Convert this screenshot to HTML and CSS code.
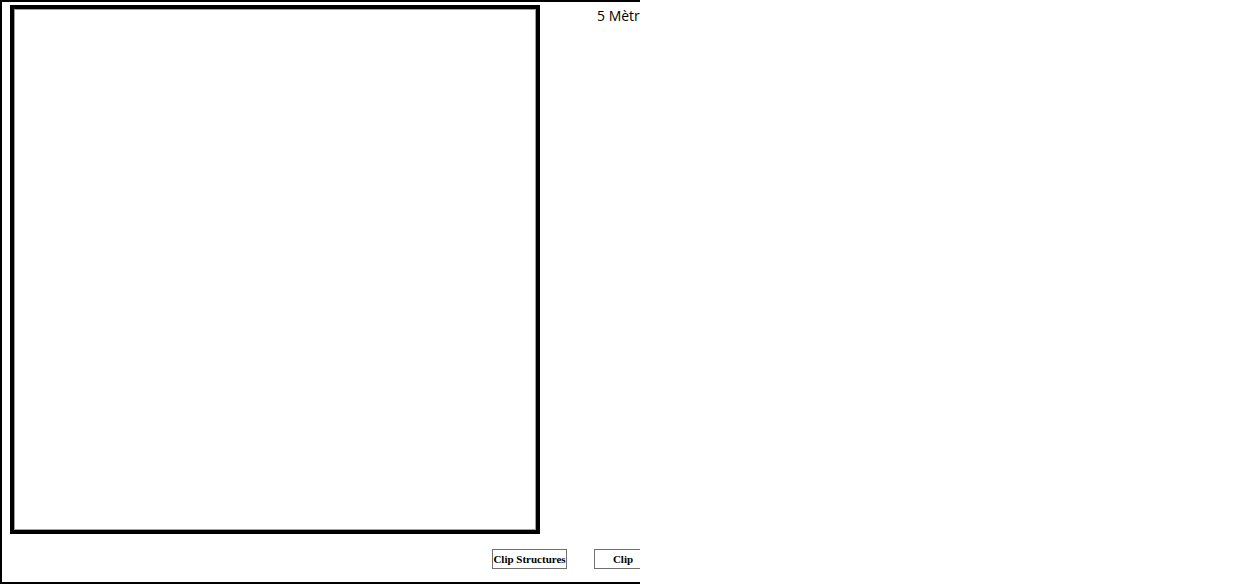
FILE: index.html
```html
<!DOCTYPE html>
<html>
<head>
<meta charset="utf-8">
<link rel="stylesheet" href="styles.css">
</head>
<body>
<div class="viewport">
  <div class="frame">
    <div class="top">
      <div class="board"><div class="board-inner"></div></div>
      <div class="label">5 Mètres de longueur</div>
    </div>
    <div class="actions">
      <button class="btn btn-wide">Clip Structures</button>
      <button class="btn btn-narrow">Clip</button>
    </div>
  </div>
</div>
</body>
</html>
```
FILE: styles.css
```css
html, body {
  margin: 0;
  padding: 0;
  background: #fff;
}
.viewport {
  width: 640px;
  height: 584px;
  overflow: hidden;
}
.frame {
  width: 900px;
  height: 584px;
  border: 2px solid #000;
  padding: 3px 0 0 8px;
  box-sizing: border-box;
  display: flex;
  flex-direction: column;
}
.top {
  display: flex;
  align-items: flex-start;
}
.board {
  width: 530px;
  height: 529px;
  box-sizing: border-box;
  border: 4px solid #000;
  flex: none;
}
.board-inner {
  width: 100%;
  height: 100%;
  box-sizing: border-box;
  border: 1px solid #a0a0a0;
}
.label {
  margin-left: 57px;
  margin-top: 1px;
  font-family: "Open Sans", "Noto Sans", sans-serif;
  font-size: 14px;
  line-height: 19px;
  color: #000;
  white-space: nowrap;
}
.actions {
  display: flex;
  gap: 27px;
  margin-top: 15px;
  padding-left: 482px;
}
.btn {
  height: 20px;
  box-sizing: border-box;
  border: 1px solid #707070;
  background: #fff;
  font-family: "Liberation Serif", serif;
  font-weight: bold;
  font-size: 11px;
  color: #000;
  padding: 0;
  margin: 0;
  white-space: nowrap;
}
.btn-wide { width: 75px; }
.btn-narrow { width: 58px; }
```
